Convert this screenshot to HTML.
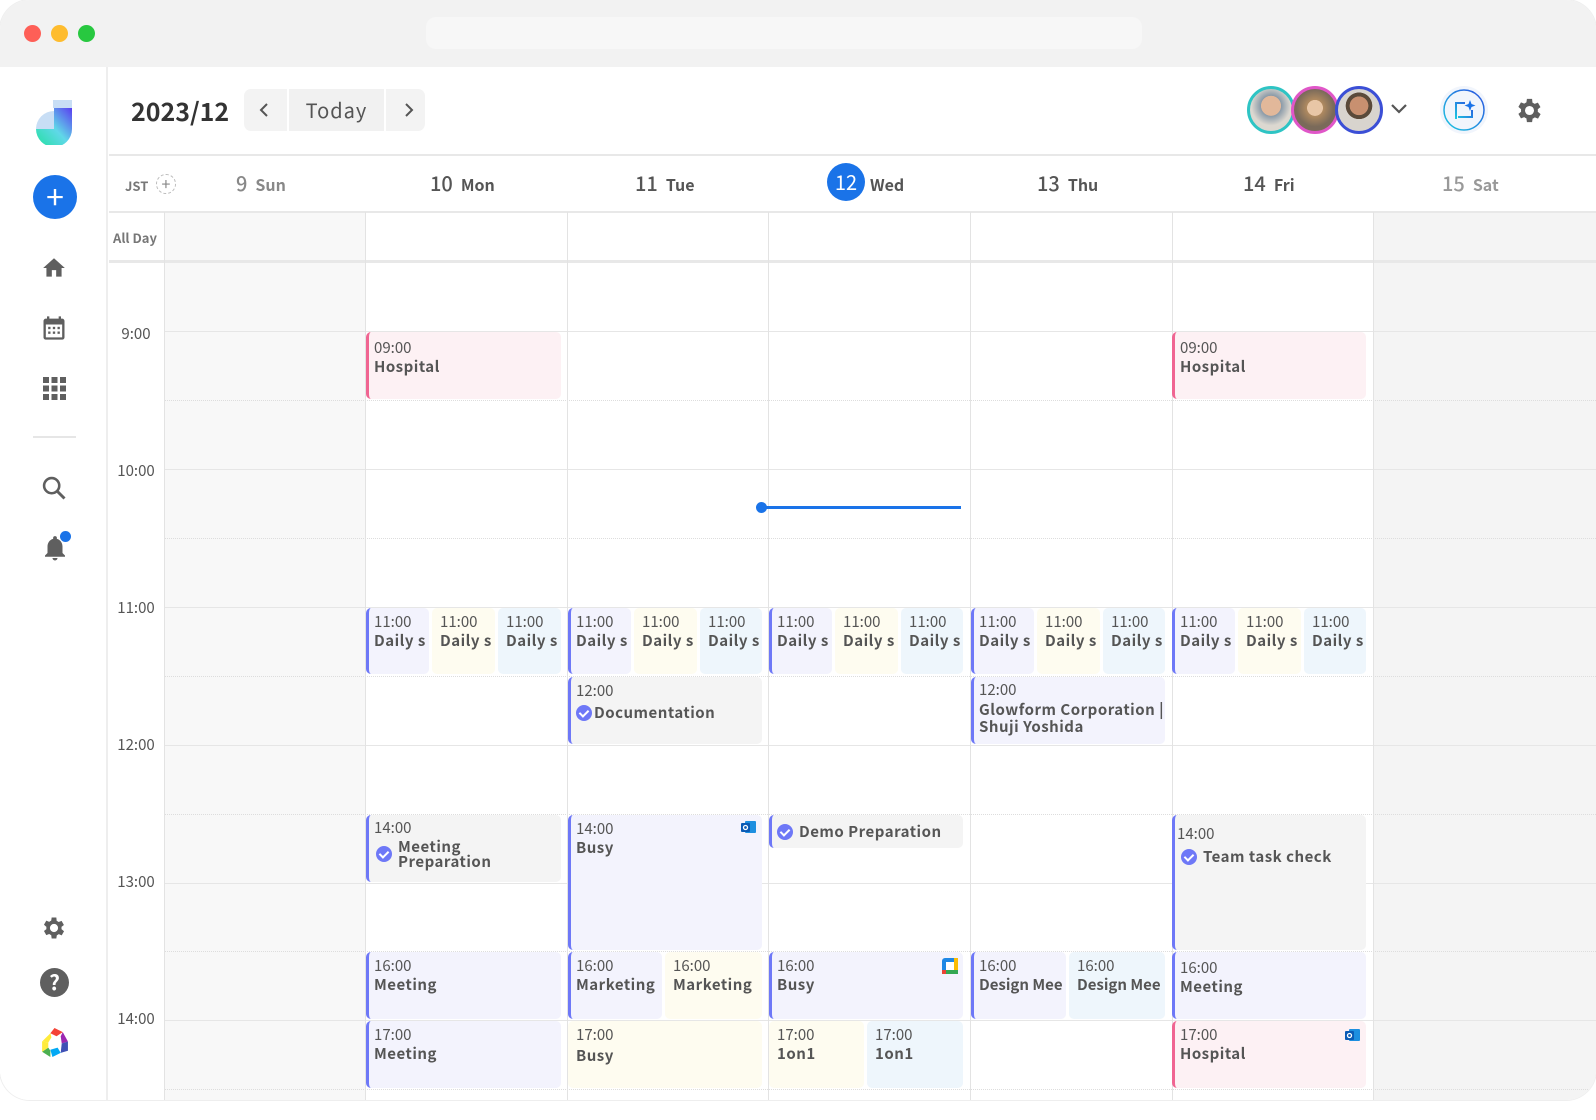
<!DOCTYPE html>
<html><head><meta charset="utf-8"><style>
*{margin:0;padding:0;box-sizing:border-box}
body{width:1596px;height:1120px;background:#fff;font-family:"Noto Sans CJK JP","Liberation Sans",sans-serif;color:#555;overflow:hidden;position:relative}
.win{position:absolute;left:0;top:0;width:1596px;height:1100px;border-radius:30px;background:#fff;overflow:hidden;box-shadow:0 0 0 1px #eee}
.top{position:absolute;left:0;top:0;width:1596px;height:67px;background:#f2f2f2}
.dot{position:absolute;top:25px;width:17px;height:17px;border-radius:50%}
.url{position:absolute;left:426px;top:17px;width:716px;height:32px;border-radius:10px;background:#f7f7f7}
.side{position:absolute;left:0;top:67px;width:108px;height:1040px;background:#fff;border-right:2px solid #eee}
.abs{position:absolute}
.hl{position:absolute;left:164px;width:1432px;height:0}
.vl{position:absolute;top:212px;width:0;height:900px;border-left:1px solid #e3e3e3}
.ev{position:absolute;border-radius:5px;padding:4px 0 0 8px;font-size:15px;line-height:19px;overflow:hidden;white-space:nowrap;color:#555}
.ev b{display:block;font-weight:700;letter-spacing:.5px}
.bl{border-left:3px solid #6e78f7;padding-left:5px}
.bp{border-left:3px solid #f06592;padding-left:5px}
.lav{background:#f3f3fd}.yel{background:#fefcf0}.blu{background:#eef6fc}.gry{background:#f4f4f4}.pnk{background:#fdf1f4}
.chk{display:inline-block;width:16px;height:16px;border-radius:50%;background:#6e78f7;vertical-align:-3px;position:relative}
.chk:after{content:"";position:absolute;left:5px;top:3px;width:4px;height:7px;border:solid #fff;border-width:0 2px 2px 0;transform:rotate(45deg)}
.tl{position:absolute;left:108px;width:56px;text-align:center;font-size:15px;color:#555}
.dh{position:absolute;top:168px;font-size:20px;color:#555;font-weight:500}
.dh span{font-size:16px;font-weight:700;margin-left:8px}
</style></head><body>
<div class="win">
<div class="top"></div>
<div class="dot" style="left:24px;background:#fe5f57"></div>
<div class="dot" style="left:51px;background:#febc2e"></div>
<div class="dot" style="left:78px;background:#28c840"></div>
<div class="url"></div>

<div class="side">
<svg class="abs" style="left:34px;top:32px" width="42" height="46" viewBox="0 0 42 46"><defs><linearGradient id="g1" x1="0" y1="1" x2="1" y2="0"><stop offset="0" stop-color="#22e0a0"/><stop offset=".5" stop-color="#60d8e8"/><stop offset="1" stop-color="#5a3ef0"/></linearGradient></defs><rect x="19" y="1" width="19" height="8" fill="#c8def5"/><path d="M2 30a18 18 0 0 1 18-18v18z" fill="#c8def5"/><path d="M20 9h18v21a18 18 0 0 1-36 0h18z" fill="url(#g1)"/></svg>
<div class="abs" style="left:33px;top:108px;width:44px;height:44px;border-radius:50%;background:#1a73e8;color:#fff;font-size:32px;line-height:42px;text-align:center">+</div>
<svg class="abs" style="left:41px;top:188px" width="26" height="26" viewBox="0 0 24 24"><path d="M10 20v-6h4v6h5v-8h3L12 3 2 12h3v8z" fill="#5f5f5f"/></svg>
<svg class="abs" style="left:40px;top:247px" width="28" height="28" viewBox="0 0 24 24"><path d="M19 4h-1V2h-2v2H8V2H6v2H5a2 2 0 0 0-2 2v14a2 2 0 0 0 2 2h14a2 2 0 0 0 2-2V6a2 2 0 0 0-2-2zm0 16H5V9h14z" fill="#5f5f5f"/><rect x="7" y="11" width="2" height="2" fill="#5f5f5f"/><rect x="11" y="11" width="2" height="2" fill="#5f5f5f"/><rect x="15" y="11" width="2" height="2" fill="#5f5f5f"/><rect x="7" y="15" width="2" height="2" fill="#5f5f5f"/><rect x="11" y="15" width="2" height="2" fill="#5f5f5f"/><rect x="15" y="15" width="2" height="2" fill="#5f5f5f"/></svg>
<svg class="abs" style="left:43px;top:310px" width="23" height="23" viewBox="0 0 23 23" fill="#5f5f5f"><rect x="0" y="0" width="6" height="6"/><rect x="8.5" y="0" width="6" height="6"/><rect x="17" y="0" width="6" height="6"/><rect x="0" y="8.5" width="6" height="6"/><rect x="8.5" y="8.5" width="6" height="6"/><rect x="17" y="8.5" width="6" height="6"/><rect x="0" y="17" width="6" height="6"/><rect x="8.5" y="17" width="6" height="6"/><rect x="17" y="17" width="6" height="6"/></svg>
<div class="abs" style="left:33px;top:369px;width:43px;height:2px;background:#e6e6e6"></div>
<svg class="abs" style="left:40px;top:407px" width="28" height="28" viewBox="0 0 24 24"><circle cx="10" cy="10" r="6.5" fill="none" stroke="#5f5f5f" stroke-width="2.2"/><path d="M15 15l6 6" stroke="#5f5f5f" stroke-width="2.5"/></svg>
<svg class="abs" style="left:40px;top:466px" width="30" height="30" viewBox="0 0 24 24"><path d="M12 22a2 2 0 0 0 2-2h-4a2 2 0 0 0 2 2zm6-6v-5c0-3-1.6-5.6-4.5-6.3V4a1.5 1.5 0 0 0-3 0v.7C7.6 5.4 6 8 6 11v5l-2 2v1h16v-1z" fill="#5f5f5f"/></svg>
<div class="abs" style="left:60px;top:464px;width:11px;height:11px;border-radius:50%;background:#1a73e8"></div>
<svg class="abs" style="left:40px;top:847px" width="28" height="28" viewBox="0 0 24 24"><path fill="#5f5f5f" d="M19.4 13a7.5 7.5 0 0 0 0-2l2.1-1.6-2-3.5-2.5 1a7 7 0 0 0-1.7-1L15 3h-4l-.4 2.7a7 7 0 0 0-1.7 1l-2.5-1-2 3.5L6.5 11a7.5 7.5 0 0 0 0 2l-2.1 1.6 2 3.5 2.5-1a7 7 0 0 0 1.7 1L11 21h4l.4-2.7a7 7 0 0 0 1.7-1l2.5 1 2-3.5zM13 15.5a3.5 3.5 0 1 1 0-7 3.5 3.5 0 0 1 0 7z" transform="translate(-1 0)"/></svg>
<div class="abs" style="left:40px;top:901px;width:29px;height:29px;border-radius:50%;background:#5f5f5f;color:#fff;font-weight:700;font-size:21px;line-height:29px;text-align:center">?</div>
<svg class="abs" style="left:39px;top:960px" width="31" height="31" viewBox="0 0 30 30"><path d="M15 1l8 4-6 4-6-3z" fill="#f44336"/><path d="M23 5l5 9-6 2-1-7z" fill="#9c27b0"/><path d="M28 14v9l-7 2 1-9z" fill="#3f51b5"/><path d="M21 25l-8 4-2-7 7-2z" fill="#03a9f4"/><path d="M11 29l-8-5 6-4 2 3z" fill="#4caf50"/><path d="M3 24V14l6 1v5z" fill="#ffeb3b"/><path d="M3 14l8-8 1 4-3 5z" fill="#ffeb3b"/></svg>
</div>

<!-- header -->
<div class="abs" style="left:131px;top:93px;font-size:25px;font-weight:700;color:#333">2023/12</div>
<div class="abs" style="left:244px;top:89px;width:181px;height:42px;border-radius:7px;background:#f3f3f3"></div>
<div class="abs" style="left:287px;top:89px;width:99px;height:42px;background:#f1f1f1;border-left:2px solid #fff;border-right:2px solid #fff;text-align:center;font-size:20px;line-height:42px;color:#555;letter-spacing:1px">Today</div>
<svg class="abs" style="left:257px;top:102px" width="14" height="16"><path d="M10 2L4 8l6 6" fill="none" stroke="#555" stroke-width="2"/></svg>
<svg class="abs" style="left:402px;top:102px" width="14" height="16"><path d="M4 2l6 6-6 6" fill="none" stroke="#555" stroke-width="2"/></svg>
<div class="abs" style="left:1247px;top:86px;width:48px;height:48px;border-radius:50%;border:3px solid #2ec4c4;background:radial-gradient(circle at 50% 40%,#e2b89a 0 30%,#8a9aa8 31%,#dcd8d0 60%)"></div>
<div class="abs" style="left:1291px;top:86px;width:48px;height:48px;border-radius:50%;border:3px solid #e056c8;background:radial-gradient(circle at 50% 45%,#e8c6a6 0 25%,#b08a60 26%,#7a6a5a 60%)"></div>
<div class="abs" style="left:1335px;top:86px;width:48px;height:48px;border-radius:50%;border:3px solid #3b4fd6;background:radial-gradient(circle at 50% 40%,#c89070 0 28%,#5a4a3a 29% 40%,#d8d4ce 41%)"></div>
<svg class="abs" style="left:1389px;top:101px" width="20" height="16"><path d="M3 4l7 7 7-7" fill="none" stroke="#555" stroke-width="2.2"/></svg>
<div class="abs" style="left:1440px;top:86px;width:48px;height:48px;border-radius:50%;background:#f1f5fc"></div>
<svg class="abs" style="left:1442px;top:88px" width="44" height="44" viewBox="0 0 44 44"><defs><linearGradient id="g2" x1="0" y1="1" x2="1" y2="0"><stop offset="0" stop-color="#1cc8e0"/><stop offset="1" stop-color="#2a50e0"/></linearGradient></defs><circle cx="22" cy="22" r="20" fill="none" stroke="url(#g2)" stroke-width="1.5"/><path d="M14 31V15h9M30 22v7H16" fill="none" stroke="url(#g2)" stroke-width="2"/><path d="M28 12l1.5 4 4 1.5-4 1.5-1.5 4-1.5-4-4-1.5 4-1.5z" fill="#1a73e8"/></svg>
<svg class="abs" style="left:1514px;top:95px" width="31" height="31" viewBox="0 0 24 24"><path fill="#5f5f5f" d="M19.4 13a7.5 7.5 0 0 0 0-2l2.1-1.6-2-3.5-2.5 1a7 7 0 0 0-1.7-1L15 3h-4l-.4 2.7a7 7 0 0 0-1.7 1l-2.5-1-2 3.5L6.5 11a7.5 7.5 0 0 0 0 2l-2.1 1.6 2 3.5 2.5-1a7 7 0 0 0 1.7 1L11 21h4l.4-2.7a7 7 0 0 0 1.7-1l2.5 1 2-3.5zM13 15.5a3.5 3.5 0 1 1 0-7 3.5 3.5 0 0 1 0 7z" transform="translate(-1 0)"/></svg>

<div class="abs" style="left:109px;top:154px;width:1487px;height:2px;background:#e8e8e8"></div>

<!-- weekend bg -->
<div class="abs" style="left:164px;top:212px;width:201px;height:900px;background:#f8f8f8"></div>
<div class="abs" style="left:1373px;top:212px;width:223px;height:900px;background:#f4f4f4"></div>

<!-- day headers -->
<div class="abs" style="left:125px;top:176px;font-size:13px;color:#777;font-weight:700">JST</div>
<div class="abs" style="left:156px;top:174px;width:20px;height:20px;border-radius:50%;border:1px dashed #bbb;color:#888;font-size:16px;line-height:17px;text-align:center">+</div>
<div class="dh" style="left:236px;color:#888">9<span>Sun</span></div>
<div class="dh" style="left:430px">10<span>Mon</span></div>
<div class="dh" style="left:635px">11<span>Tue</span></div>
<div class="abs" style="left:827px;top:163px;width:38px;height:38px;border-radius:50%;background:#1a73e8;color:#fff;font-size:20px;line-height:38px;text-align:center">12</div>
<div class="dh" style="left:862px"><span>Wed</span></div>
<div class="dh" style="left:1037px">13<span>Thu</span></div>
<div class="dh" style="left:1243px">14<span>Fri</span></div>
<div class="dh" style="left:1442px;color:#999">15<span>Sat</span></div>

<div class="abs" style="left:109px;top:211px;width:1487px;height:2px;background:#e8e8e8"></div>
<div class="abs" style="left:113px;top:228px;font-size:13px;font-weight:700;color:#777">All Day</div>
<div class="abs" style="left:109px;top:260px;width:1487px;height:3px;background:#e8e8e8"></div>

<!-- grid lines -->
<div class="hl" style="top:331px;border-top:1px solid #e6e6e6"></div>
<div class="hl" style="top:400px;border-top:1px dotted #ddd"></div>
<div class="hl" style="top:469px;border-top:1px solid #e6e6e6"></div>
<div class="hl" style="top:538px;border-top:1px dotted #ddd"></div>
<div class="hl" style="top:607px;border-top:1px solid #e6e6e6"></div>
<div class="hl" style="top:676px;border-top:1px dotted #ddd"></div>
<div class="hl" style="top:745px;border-top:1px solid #e6e6e6"></div>
<div class="hl" style="top:814px;border-top:1px dotted #ddd"></div>
<div class="hl" style="top:883px;border-top:1px solid #e6e6e6"></div>
<div class="hl" style="top:951px;border-top:1px dotted #ddd"></div>
<div class="hl" style="top:1020px;border-top:1px solid #e6e6e6"></div>
<div class="hl" style="top:1089px;border-top:1px dotted #ddd"></div>
<div class="vl" style="left:164px"></div>
<div class="vl" style="left:365px"></div>
<div class="vl" style="left:567px"></div>
<div class="vl" style="left:768px"></div>
<div class="vl" style="left:970px"></div>
<div class="vl" style="left:1172px"></div>
<div class="vl" style="left:1373px"></div>

<div class="tl" style="top:323px">9:00</div>
<div class="tl" style="top:460px">10:00</div>
<div class="tl" style="top:597px">11:00</div>
<div class="tl" style="top:734px">12:00</div>
<div class="tl" style="top:871px">13:00</div>
<div class="tl" style="top:1008px">14:00</div>

<!-- now line -->
<div class="abs" style="left:761px;top:506px;width:200px;height:3px;background:#1a73e8"></div>
<div class="abs" style="left:756px;top:502px;width:11px;height:11px;border-radius:50%;background:#1a73e8"></div>

<!-- Mon -->
<div class="ev bp pnk" style="left:366px;top:332px;width:195px;height:67px;padding-top:6px">09:00<b>Hospital</b></div>
<div class="ev bl lav" style="left:366px;top:608px;width:63px;height:66px;padding-top:4px">11:00<b>Daily s</b></div>
<div class="ev yel" style="left:432px;top:608px;width:63px;height:66px">11:00<b>Daily s</b></div>
<div class="ev blu" style="left:498px;top:608px;width:63px;height:66px">11:00<b>Daily s</b></div>
<div class="ev bl gry" style="left:366px;top:815px;width:195px;height:67px;line-height:17px">14:00<div style="display:flex;align-items:center;margin-top:3px"><span class="chk" style="margin:0 6px 0 2px"></span><b style="line-height:15px">Meeting<br>Preparation</b></div></div>
<div class="ev bl lav" style="left:366px;top:952px;width:195px;height:67px">16:00<b>Meeting</b></div>
<div class="ev bl lav" style="left:366px;top:1021px;width:195px;height:67px">17:00<b>Meeting</b></div>

<!-- Tue -->
<div class="ev bl lav" style="left:568px;top:608px;width:63px;height:66px">11:00<b>Daily s</b></div>
<div class="ev yel" style="left:634px;top:608px;width:63px;height:66px">11:00<b>Daily s</b></div>
<div class="ev blu" style="left:700px;top:608px;width:62px;height:66px">11:00<b>Daily s</b></div>
<div class="ev bl gry" style="left:568px;top:677px;width:194px;height:67px">12:00<b style="margin-top:3px"><span class="chk" style="margin-right:2px"></span>Documentation</b></div>
<div class="ev bl lav" style="left:568px;top:815px;width:194px;height:135px">14:00<b>Busy</b></div>
<svg class="abs" style="left:741px;top:821px" width="15" height="13"><rect x="4" y="0" width="11" height="12" rx="1" fill="#1d8fe0"/><rect x="0" y="2" width="9" height="9" rx="1" fill="#0a5bb5"/><circle cx="4.5" cy="6.5" r="2" fill="none" stroke="#fff" stroke-width="1.3"/></svg>
<div class="ev bl lav" style="left:568px;top:952px;width:94px;height:67px">16:00<b>Marketing</b></div>
<div class="ev yel" style="left:665px;top:952px;width:97px;height:67px">16:00<b>Marketing</b></div>
<div class="ev yel" style="left:568px;top:1021px;width:194px;height:67px;padding-left:8px">17:00<b style="margin-top:2px">Busy</b></div>

<!-- Wed -->
<div class="ev bl lav" style="left:769px;top:608px;width:63px;height:66px">11:00<b>Daily s</b></div>
<div class="ev yel" style="left:835px;top:608px;width:63px;height:66px">11:00<b>Daily s</b></div>
<div class="ev blu" style="left:901px;top:608px;width:62px;height:66px">11:00<b>Daily s</b></div>
<div class="ev bl gry" style="left:769px;top:815px;width:194px;height:33px;padding-top:7px"><b><span class="chk" style="margin-right:6px"></span>Demo Preparation</b></div>
<div class="ev bl lav" style="left:769px;top:952px;width:194px;height:67px">16:00<b>Busy</b></div>
<svg class="abs" style="left:942px;top:958px" width="16" height="16"><rect x="0" y="0" width="16" height="16" rx="3" fill="#1e88e5"/><rect x="0" y="12" width="16" height="4" fill="#34a853"/><rect x="12" y="0" width="4" height="12" fill="#fbbc04"/><rect x="4" y="4" width="8" height="8" fill="#fff"/><rect x="0" y="12" width="4" height="4" fill="#ea4335"/></svg>
<div class="ev yel" style="left:769px;top:1021px;width:95px;height:67px">17:00<b>1on1</b></div>
<div class="ev blu" style="left:867px;top:1021px;width:96px;height:67px">17:00<b>1on1</b></div>

<!-- Thu -->
<div class="ev bl lav" style="left:971px;top:608px;width:63px;height:66px">11:00<b>Daily s</b></div>
<div class="ev yel" style="left:1037px;top:608px;width:63px;height:66px">11:00<b>Daily s</b></div>
<div class="ev blu" style="left:1103px;top:608px;width:62px;height:66px">11:00<b>Daily s</b></div>
<div class="ev bl lav" style="left:971px;top:677px;width:194px;height:67px;line-height:18px">12:00<b style="line-height:17px;margin-top:2px">Glowform Corporation |<br>Shuji Yoshida</b></div>
<div class="ev bl lav" style="left:971px;top:952px;width:95px;height:67px">16:00<b style="letter-spacing:0">Design Mee</b></div>
<div class="ev blu" style="left:1069px;top:952px;width:96px;height:67px">16:00<b style="letter-spacing:0">Design Mee</b></div>

<!-- Fri -->
<div class="ev bp pnk" style="left:1172px;top:332px;width:194px;height:67px;padding-top:6px">09:00<b>Hospital</b></div>
<div class="ev bl lav" style="left:1172px;top:608px;width:63px;height:66px">11:00<b>Daily s</b></div>
<div class="ev yel" style="left:1238px;top:608px;width:63px;height:66px">11:00<b>Daily s</b></div>
<div class="ev blu" style="left:1304px;top:608px;width:62px;height:66px">11:00<b>Daily s</b></div>
<div class="ev bl gry" style="left:1172px;top:815px;width:194px;height:135px;padding-top:9px;padding-left:2px">14:00<b style="margin-top:4px"><span class="chk" style="margin:0 6px 0 4px"></span>Team task check</b></div>
<div class="ev bl lav" style="left:1172px;top:952px;width:194px;height:67px;padding-top:6px">16:00<b>Meeting</b></div>
<div class="ev bp pnk" style="left:1172px;top:1021px;width:194px;height:67px">17:00<b>Hospital</b></div>
<svg class="abs" style="left:1345px;top:1029px" width="15" height="13"><rect x="4" y="0" width="11" height="12" rx="1" fill="#1d8fe0"/><rect x="0" y="2" width="9" height="9" rx="1" fill="#0a5bb5"/><circle cx="4.5" cy="6.5" r="2" fill="none" stroke="#fff" stroke-width="1.3"/></svg>
</div>
</body></html>
